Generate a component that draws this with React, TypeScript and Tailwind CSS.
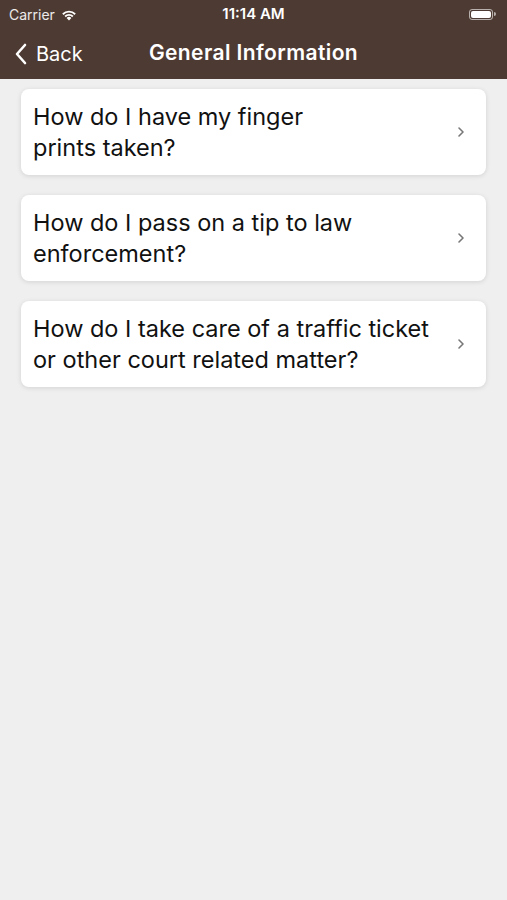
import React from "react";

const items: React.ReactNode[] = [
  <>How do I have my finger<br />prints taken?</>,
  <>How do I pass on a tip to law<br />enforcement?</>,
  <>How do I take care of a traffic ticket<br />or other court related matter?</>,
];

export default function App() {
  return (
    <div className="w-[507px] h-[900px] bg-[#efefef] flex flex-col" style={{ fontFamily: "Inter, 'Noto Sans', sans-serif" }}>
      <div className="bg-[#4d3a33] text-white flex flex-col">
        <div className="h-[28px] flex items-center justify-between px-[9px] relative">
          <div className="flex items-center gap-[5px] text-[14px] text-white/90">
            <span>Carrier</span>
            <svg width="18" height="13" viewBox="0 0 18 13" fill="white">
              <path d="M9 12.5 L6.6 9.9 A3.4 3.4 0 0 1 11.4 9.9 Z" />
              <path d="M4.5 7.8 A6.4 6.4 0 0 1 13.5 7.8 L12.2 9.2 A4.5 4.5 0 0 0 5.8 9.2 Z" />
              <path d="M2.2 5.5 A9.6 9.6 0 0 1 15.8 5.5 L14.5 6.9 A7.7 7.7 0 0 0 3.5 6.9 Z" />
            </svg>
          </div>
          <span className="absolute left-1/2 -translate-x-1/2 text-[15px] font-semibold">11:14 AM</span>
          <div className="flex items-center mr-[2px]">
            <div className="w-[24px] h-[11px] rounded-[3px] border border-white/60 p-[1px]">
              <div className="w-full h-full bg-white rounded-[2px]" />
            </div>
            <div className="w-[2px] h-[4px] bg-white/60 rounded-r-sm ml-[1px]" />
          </div>
        </div>
        <div className="h-[51px] flex items-center relative">
          <div className="flex items-center pl-[14px] gap-[8px]">
            <svg width="14" height="22" viewBox="0 0 14 22" fill="none" stroke="white" strokeWidth="2.6" strokeLinecap="round" strokeLinejoin="round">
              <path d="M11 2 L3 11 L11 20" />
            </svg>
            <span className="text-[20px]">Back</span>
          </div>
          <span className="absolute left-1/2 -translate-x-1/2 -translate-y-[1px] text-[21px] font-semibold tracking-[0.4px]">General Information</span>
        </div>
      </div>
      <div className="flex flex-col gap-[20px] px-[21px] pt-[10px]">
        {items.map((t, i) => (
          <div key={i} className="bg-white rounded-[8px] h-[86px] flex items-center justify-between pl-[12px] pr-[21px] shadow-[0_1px_5px_rgba(0,0,0,0.12)]">
            <div className="text-[23.5px] leading-[31px] text-[#111] tracking-[0px]">{t}</div>
            <svg width="8" height="12" viewBox="0 0 8 12" fill="none" stroke="#777" strokeWidth="1.6" strokeLinecap="round" strokeLinejoin="round">
              <path d="M2 2 L6 6 L2 10" />
            </svg>
          </div>
        ))}
      </div>
    </div>
  );
}
